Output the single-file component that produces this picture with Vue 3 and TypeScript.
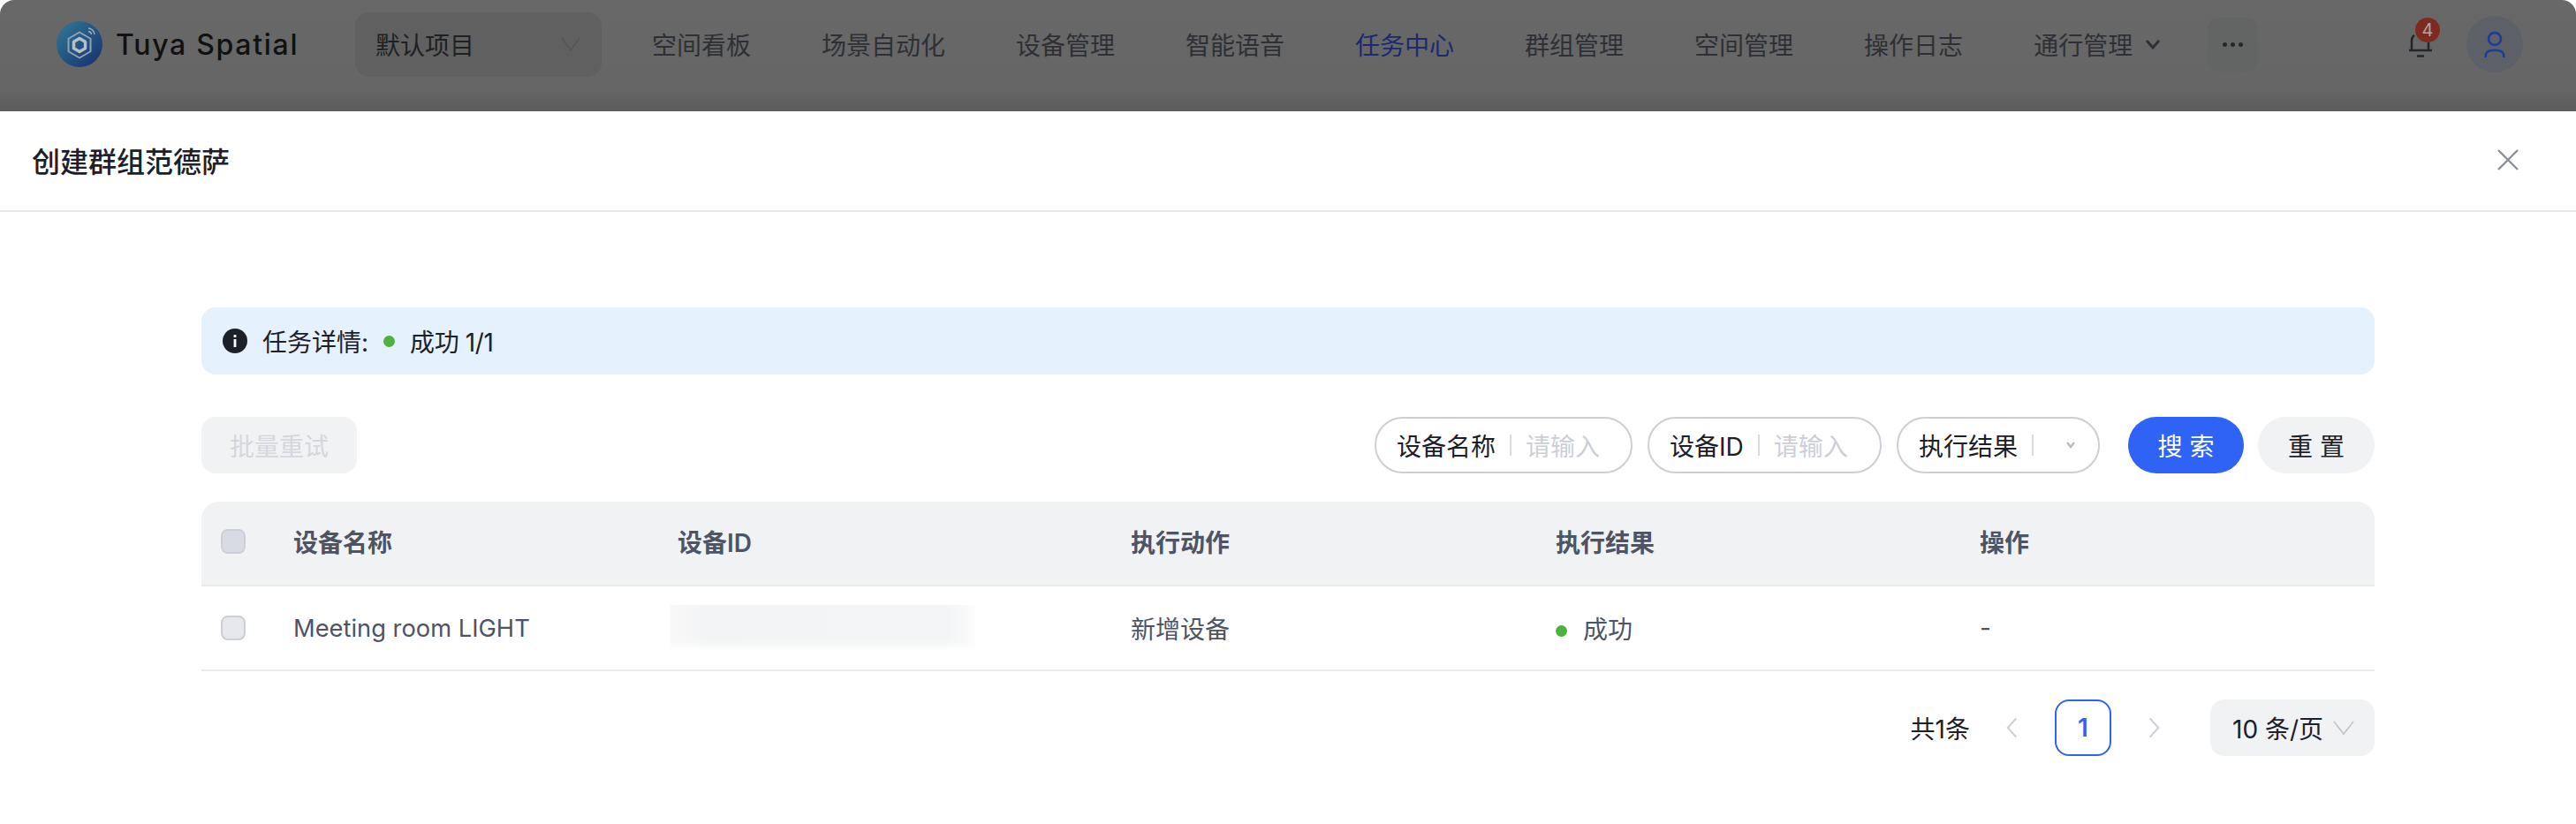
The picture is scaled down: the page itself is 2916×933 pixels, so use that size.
<script setup lang="ts">
const navItems: { label: string; active?: boolean }[] = [
  { label: '空间看板' },
  { label: '场景自动化' },
  { label: '设备管理' },
  { label: '智能语音' },
  { label: '任务中心', active: true },
  { label: '群组管理' },
  { label: '空间管理' },
  { label: '操作日志' },
]
const columns = ['设备名称', '设备ID', '执行动作', '执行结果', '操作']
</script>

<template>
  <div class="page">
    <header class="nav">
      <div class="brand">
        <svg class="logo" viewBox="0 0 52 52">
          <defs>
            <linearGradient id="lg" x1="0.1" y1="0.1" x2="0.85" y2="0.9">
              <stop offset="0" stop-color="#2d7392" />
              <stop offset="1" stop-color="#1a3873" />
            </linearGradient>
          </defs>
          <circle cx="26" cy="26" r="26" fill="url(#lg)" />
          <path d="M26 12.500l12.500 7.250v14.500L26 41.500l-12.500-7.250v-14.500z" fill="none" stroke="#8fa3b5" stroke-width="2" stroke-linejoin="round" />
          <path d="M26 19.500l6.500 3.750v7.500L26 34.500l-6.500-3.750v-7.500z" fill="none" stroke="#b4bfca" stroke-width="3.500" stroke-linejoin="round" />
          <path d="M36 8a7.500 7.500 0 0 1 7 7M36 11.500a4 4 0 0 1 3.500 3.500" fill="none" stroke="#9fb0bf" stroke-width="1.400" />
        </svg>
        <span class="brand-name">Tuya Spatial</span>
      </div>
      <div class="project">
        <span>默认项目</span>
        <svg class="project-arrow" viewBox="0 0 22 16"><path d="M1 1l10 14L21 1" fill="none" stroke="#555" stroke-width="1.500" /></svg>
      </div>
      <nav class="menu">
        <a v-for="item in navItems" :key="item.label" class="menu-item" :class="{ active: item.active }">{{ item.label }}</a>
        <a class="menu-item with-arrow">
          通行管理
          <svg class="menu-arrow" viewBox="0 0 18 12"><path d="M2 2l7 8 7-8" fill="none" stroke="#2e3035" stroke-width="3" /></svg>
        </a>
      </nav>
      <div class="more"><i></i><i></i><i></i></div>
      <div class="right">
        <div class="bell">
          <svg viewBox="0 0 26 28" class="bell-icon">
            <path d="M3 19V8q0-4 3-6M22 10v9M0 19h26M9 25.500h8" fill="none" stroke="#22252c" stroke-width="2.500" />
          </svg>
          <span class="badge">4</span>
        </div>
        <div class="avatar">
          <svg viewBox="0 0 24 31" class="avatar-icon">
            <circle cx="12" cy="9" r="7" fill="none" stroke="#1a3a9c" stroke-width="2.600" />
            <path d="M1.500 30c0-5 3-8 7-8h7c4 0 7 3 7 8" fill="none" stroke="#1a3a9c" stroke-width="2.600" />
          </svg>
        </div>
      </div>
    </header>

    <section class="head">
      <h1 class="title">创建群组范德萨</h1>
      <svg class="close" viewBox="0 0 26 26"><path d="M2 2l22 22M24 2L2 24" fill="none" stroke="#8a8f99" stroke-width="2.400" /></svg>
    </section>

    <main class="body">
      <div class="alert">
        <svg class="info" viewBox="0 0 28 28">
          <circle cx="14" cy="14" r="14" fill="#1c2029" />
          <rect x="12.600" y="12" width="2.800" height="9" fill="#fff" />
          <rect x="12.600" y="7" width="2.800" height="3" fill="#fff" />
        </svg>
        <span class="alert-label">任务详情:</span>
        <span class="dot alert-dot"></span>
        <span class="alert-value">成功 1/1</span>
      </div>

      <div class="toolbar">
        <button class="btn-disabled">批量重试</button>
        <div class="filters">
          <div class="field f1"><span class="field-label">设备名称</span><span class="sep"></span><span class="ph">请输入</span></div>
          <div class="field f2"><span class="field-label">设备ID</span><span class="sep"></span><span class="ph">请输入</span></div>
          <div class="field f3">
            <span class="field-label">执行结果</span><span class="sep"></span>
            <svg class="field-arrow" viewBox="0 0 12 10"><path d="M2 2l4 5 4-5" fill="none" stroke="#b9bcc4" stroke-width="2.500" /></svg>
          </div>
          <button class="btn primary">搜 索</button>
          <button class="btn ghost">重 置</button>
        </div>
      </div>

      <div class="table">
        <div class="row header">
          <div class="cell"><span class="check check-head"></span></div>
          <div v-for="c in columns" :key="c" class="cell">{{ c }}</div>
        </div>
        <div class="row">
          <div class="cell"><span class="check"></span></div>
          <div class="cell latin">Meeting room LIGHT</div>
          <div class="cell"><span class="blurred"></span></div>
          <div class="cell">新增设备</div>
          <div class="cell"><span class="dot row-dot"></span>成功</div>
          <div class="cell">-</div>
        </div>
      </div>

      <div class="pager">
        <span class="total">共1条</span>
        <svg class="chev prev" viewBox="0 0 16 28"><path d="M14 2L3 14l11 12" fill="none" stroke="#cdcfd6" stroke-width="2.200" /></svg>
        <span class="page-num">1</span>
        <svg class="chev next" viewBox="0 0 16 28"><path d="M2 2l11 12L2 26" fill="none" stroke="#cdcfd6" stroke-width="2.200" /></svg>
        <div class="size">
          <span>10 条/页</span>
          <svg class="size-arrow" viewBox="0 0 26 18"><path d="M2 2l11 14L24 2" fill="none" stroke="#c3c6cd" stroke-width="1.800" /></svg>
        </div>
      </div>
    </main>
  </div>
</template>

<style>
html, body { margin: 0; background: #fff; }
</style>

<style scoped>
.page {
  width: 2916px;
  height: 933px;
  overflow: hidden;
  background: #fff;
  color: #1c2029;
  font-family: Inter, "Noto Sans CJK SC", sans-serif;
  font-size: 28px;
}
.nav {
  height: 126px;
  box-sizing: border-box;
  display: flex;
  align-items: center;
  padding: 0 60px 26px 64px;
  border-radius: 16px 16px 0 0;
  background: linear-gradient(#686868 0, #666 80%, #5c5c5c 100%);
  color: #2e3035;
}
.brand { display: flex; align-items: center; gap: 15px; width: 338px; }
.logo { width: 52px; height: 52px; flex: none; }
.brand-name { font-size: 32px; font-weight: 500; letter-spacing: 1.700px; color: #111; white-space: nowrap; }
.project {
  width: 279px;
  height: 73px;
  box-sizing: border-box;
  padding: 0 24px 0 23px;
  display: flex;
  align-items: center;
  justify-content: space-between;
  background: #606060;
  border-radius: 16px;
  color: #1f2024;
}
.project-arrow { width: 22px; height: 16px; }
.menu { display: flex; align-items: center; gap: 80px; margin-left: 57px; white-space: nowrap; }
.menu-item.active { color: #1a2a6e; }
.with-arrow { display: flex; align-items: center; gap: 14px; }
.menu-arrow { width: 18px; height: 12px; }
.more {
  width: 58px;
  height: 61px;
  margin-left: 52px;
  border-radius: 14px;
  background: #626563;
  display: flex;
  align-items: center;
  justify-content: center;
  gap: 4px;
}
.more i { width: 5px; height: 5px; border-radius: 50%; background: #26282d; }
.right { margin-left: auto; display: flex; align-items: center; gap: 30px; }
.bell { position: relative; width: 35px; height: 64px; }
.bell-icon { position: absolute; left: 0; top: 20px; width: 26px; height: 28px; }
.badge {
  position: absolute;
  left: 7px;
  top: 2px;
  width: 28px;
  height: 28px;
  border-radius: 50%;
  background: #7f2a20;
  color: #a8a8a8;
  font-size: 20px;
  line-height: 28px;
  text-align: center;
}
.avatar {
  width: 64px;
  height: 64px;
  border-radius: 50%;
  background: #5e6068;
  display: flex;
  align-items: center;
  justify-content: center;
}
.avatar-icon { width: 24px; height: 31px; }
.head {
  height: 114px;
  box-sizing: border-box;
  border-bottom: 2px solid #e8e8e8;
  display: flex;
  align-items: center;
  justify-content: space-between;
  padding: 0 64px 2px 36px;
}
.title { margin: 0; font-size: 32px; font-weight: 500; color: #1c2029; }
.close { width: 26px; height: 26px; }
.body { padding: 108px 228px 0 228px; display: flex; flex-direction: column; }
.alert {
  height: 76px;
  box-sizing: border-box;
  padding: 0 24px;
  display: flex;
  align-items: center;
  background: #e6f1fe;
  border-radius: 16px;
}
.info { width: 28px; height: 28px; flex: none; }
.alert-label { margin-left: 17px; }
.alert-value { letter-spacing: -0.400px; }
.dot { display: inline-block; border-radius: 50%; background: #4fb13f; }
.alert-dot { width: 13px; height: 13px; margin: 0 17px 0 17px; }
.toolbar { display: flex; justify-content: space-between; margin-top: 48px; }
.btn-disabled {
  width: 176px;
  height: 64px;
  border: 0;
  border-radius: 16px;
  background: #f1f2f4;
  color: #d5d7dc;
  font: inherit;
}
.filters { display: flex; align-items: center; }
.field {
  height: 64px;
  box-sizing: border-box;
  border: 2px solid #cdcfd6;
  border-radius: 32px;
  display: flex;
  align-items: center;
  padding-left: 23px;
  white-space: nowrap;
}
.f1 { width: 292px; }
.f2 { width: 265px; margin-left: 17px; }
.f3 { width: 230px; margin-left: 17px; }
.sep { width: 2px; height: 24px; background: #d9dbe0; margin: 0 16px; flex: none; }
.ph { color: #cdcfd6; }
.field-arrow { width: 12px; height: 10px; margin-left: 20px; }
.btn {
  height: 64px;
  border: 0;
  border-radius: 32px;
  font: inherit;
  white-space: pre;
}
.primary { width: 131px; margin-left: 32px; background: #2f63f6; color: #fff; }
.ghost { width: 132px; margin-left: 16px; background: #f1f2f4; color: #1c2029; }
.table { margin-top: 32px; color: #4e5464; }
.row {
  display: grid;
  grid-template-columns: 104px 435px 513px 481px 480px 1fr;
  height: 96px;
  box-sizing: border-box;
  border-bottom: 2px solid #e8e9ec;
  align-items: center;
}
.row.header {
  background: #f1f2f4;
  border-radius: 20px 20px 0 0;
  font-weight: 600;
  padding-bottom: 4px;
}
.cell { display: flex; align-items: center; white-space: nowrap; }
.latin { font-size: 27.300px; }
.check {
  width: 28px;
  height: 28px;
  box-sizing: border-box;
  margin-left: 22px;
  border: 2px solid #cdcfd6;
  border-radius: 8px;
  background: #e6e8ed;
}
.check-head { background: #d8dbe3; }
.blurred {
  width: 346px;
  height: 52px;
  margin-left: -9px;
  background:
    linear-gradient(to top, #fff 0, rgba(255, 255, 255, 0) 22%),
    linear-gradient(to right, #f9f9fa, #f3f4f5 12%, #f4f5f6 92%, #fcfcfc);
}
.row-dot { width: 13px; height: 13px; margin-right: 18px; margin-top: 6px; }
.pager { display: flex; align-items: center; justify-content: flex-end; margin-top: 32px; }
.total { margin-right: 40px; }
.chev { width: 14px; height: 26px; }
.page-num {
  width: 64px;
  height: 64px;
  box-sizing: border-box;
  margin: 0 42px;
  border: 2px solid #2f63f6;
  border-radius: 16px;
  color: #2f63f6;
  display: flex;
  align-items: center;
  justify-content: center;
  font-weight: 600;
}
.size {
  width: 186px;
  height: 64px;
  box-sizing: border-box;
  margin-left: 56px;
  padding: 0 22px 0 25px;
  border-radius: 16px;
  background: #f1f2f4;
  display: flex;
  align-items: center;
  justify-content: space-between;
  white-space: nowrap;
}
.size-arrow { width: 26px; height: 18px; }
</style>
